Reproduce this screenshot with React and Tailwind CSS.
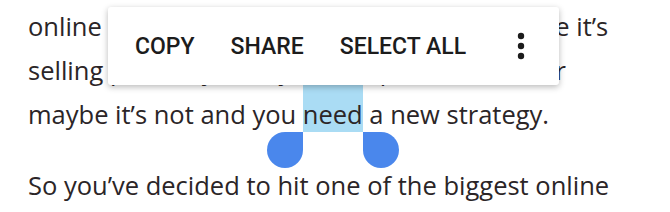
import { useState } from 'react';

const ACCIONES = ['COPY', 'SHARE', 'SELECT ALL'];

function MenuSeleccion() {
  return (
    <div
      className="absolute left-[108px] top-[7px] w-[451px] h-[78px] bg-white rounded-[3px] shadow-[0_2px_6px_rgba(0,0,0,0.28)] flex items-center pl-[27px] gap-[36px]"
      style={{ fontFamily: 'Roboto, "Liberation Sans", sans-serif' }}
    >
      {ACCIONES.map((accion) => (
        <span key={accion} className="text-[23px] font-medium text-[#1c1c1c] leading-none">
          {accion}
        </span>
      ))}
      <svg className="ml-auto mr-[34px]" width="8" height="28" viewBox="0 0 8 28">
        <circle cx="4" cy="4" r="3.2" fill="#1c1c1c" />
        <circle cx="4" cy="14" r="3.2" fill="#1c1c1c" />
        <circle cx="4" cy="24" r="3.2" fill="#1c1c1c" />
      </svg>
    </div>
  );
}

export default function App() {
  const [seleccion] = useState('need');

  return (
    <div
      className="relative w-[670px] h-[212px] overflow-hidden bg-white text-[#2b2527]"
      style={{ fontFamily: '"Open Sans", Lato, sans-serif' }}
    >
      <div className="pl-[28px] pt-[4px] text-[25.5px] leading-[44px] whitespace-nowrap">
        <p>
          online store for a while now and, sure, maybe it&rsquo;s
          <br />
          selling precisely how you&rsquo;d hoped it would, or
          <br />
          maybe it&rsquo;s not and you{' '}
          <span className="relative bg-[#aadcf4] pt-[13px] pb-[1px]">
            {seleccion}
            <span className="absolute left-[-36px] top-full w-[36px] h-[36px] bg-[#4a87ec] rounded-full rounded-tr-none" />
            <span className="absolute right-[-36px] top-full w-[36px] h-[36px] bg-[#4a87ec] rounded-full rounded-tl-none" />
          </span>{' '}
          a new strategy.
        </p>
        <p className="mt-[27px]">So you&rsquo;ve decided to hit one of the biggest online</p>
      </div>
      <MenuSeleccion />
    </div>
  );
}
